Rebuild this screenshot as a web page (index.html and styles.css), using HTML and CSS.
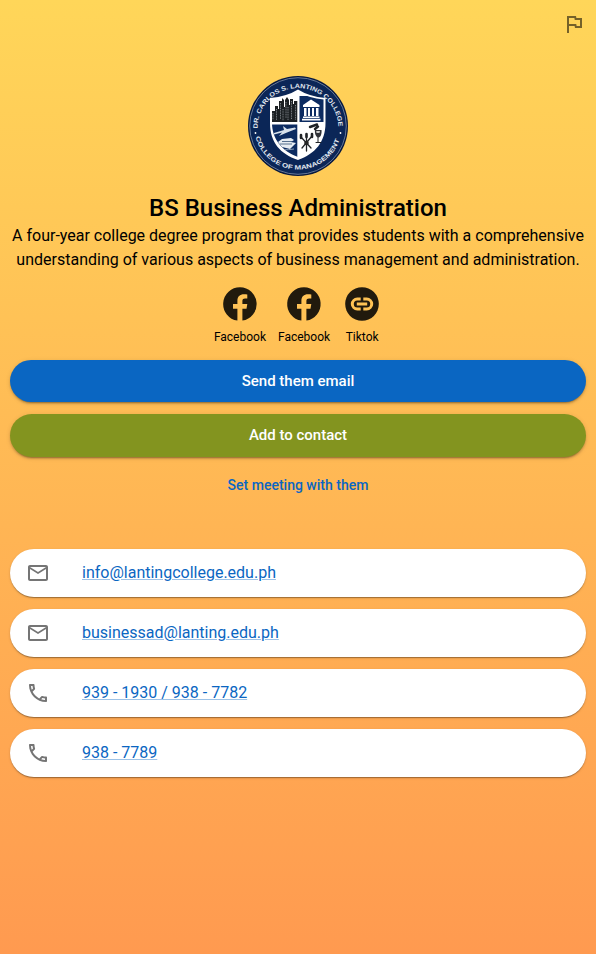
FILE: index.html
```html
<!DOCTYPE html>
<html lang="en">
<head>
<meta charset="utf-8">
<title>BS Business Administration</title>
<link rel="stylesheet" href="styles.css">
</head>
<body>
<svg class="sprite" aria-hidden="true">
  <symbol id="fb-round" viewBox="0 0 40 40"><path d="M20 3.2A16.8 16.8 0 0 0 17.4 36.6V24.7H13V20H17.4V16.8C17.4 12.400 19.9 10.200 24 10.200C25.4 10.200 26.5 10.300 27.3 10.400V14.500H25.2C22.9 14.500 22.4 15.500 22.4 17.2V20H27.3L26.5 24.7H22.4V36.6A16.8 16.8 0 0 0 20 3.2Z"/></symbol>
  <symbol id="mail" viewBox="0 0 24 24"><path d="M22 6c0-1.1-.9-2-2-2H4c-1.1 0-2 .9-2 2v12c0 1.1.9 2 2 2h16c1.1 0 2-.9 2-2V6zm-2 0-8 5-8-5h16zm0 12H4V8l8 5 8-5v10z"/></symbol>
  <symbol id="phone" viewBox="0 0 24 24"><path d="M6.54 5c.06.89.21 1.76.45 2.59l-1.2 1.2c-.41-1.2-.67-2.47-.76-3.79h1.51m9.86 12.02c.85.24 1.72.39 2.6.45v1.49c-1.32-.09-2.59-.35-3.8-.75l1.2-1.19M7.5 3H4c-.55 0-1 .45-1 1 0 9.39 7.61 17 17 17 .55 0 1-.45 1-1v-3.49c0-.55-.45-1-1-1-1.24 0-2.45-.2-3.57-.57-.1-.04-.21-.05-.31-.05-.26 0-.51.1-.71.29l-2.2 2.2c-2.83-1.45-5.15-3.76-6.59-6.59l2.2-2.2c.28-.28.36-.67.25-1.02C8.7 6.45 8.5 5.25 8.5 4c0-.55-.45-1-1-1z"/></symbol>
</svg>

<header class="toolbar">
  <svg class="flag" viewBox="0 0 24 24"><path d="m12.36 6 .4 2H18v6h-3.36l-.4-2H7V6h5.36M14 4H5v17h2v-7h5.600l.4 2h7V6h-5.600L14 4z"/></svg>
</header>

<main class="card">
  <svg class="logo" viewBox="0 0 100 100">
    <defs>
      <path id="arc-top" d="M9.500 52.500A40.500 40.500 0 1 1 90.500 52.500"/>
      <path id="arc-bottom" d="M7.500 61A44 44 0 0 0 92.500 61"/>
      <clipPath id="shield-clip"><path d="M24 23.500Q39 22 50 16Q61 22 75.500 23.500V47C75.500 64 66 75 50 81C34 75 24 63 24 47Z"/></clipPath>
    </defs>
    <circle cx="50" cy="50" r="50" fill="#07183f"/>
    <circle cx="50" cy="50" r="48.300" fill="#0b2657" stroke="#8f9fb8" stroke-width=".7"/>
    <text class="seal-text"><textPath href="#arc-top" textLength="125" lengthAdjust="spacingAndGlyphs">DR. CARLOS S. LANTING COLLEGE</textPath></text>
    <text class="seal-text"><textPath href="#arc-bottom" textLength="112" lengthAdjust="spacingAndGlyphs">COLLEGE OF MANAGEMENT</textPath></text>
    <circle cx="7.500" cy="57" r=".9" fill="#fff"/>
    <circle cx="92.500" cy="57" r=".9" fill="#fff"/>
    <path d="M22 22Q39 20.500 50 13.500Q61 20.500 77.500 22V47C77.500 66 67 78 50 84C32 78 22 66 22 47Z" fill="#fff"/>
    <g clip-path="url(#shield-clip)">
      <path d="M51.500 20H76V46H51.500ZM22 48.500H49.300V82H22Z" fill="#0c2b61"/>
      <path d="M24 46V35H27V30H30V33H31V25H34V22L36 24V31H37V24L39 21L41 24V29H42V23H45V28H46V25H49.300V46Z" fill="#1c2023"/>
      <path d="M25 37V44M28.500 33V44M32.500 27V43M35 33V45M38 26V42M40 31V44M43.500 25V43M47.500 29V44" stroke="#a5abb0" stroke-width=".7" stroke-dasharray="1 .7"/>
      <path d="M55 29L63 23.500L71.500 29V31H55ZM56 32H58.500V40H56ZM60 32H62V40H60ZM64 32H66V40H64ZM68 32H70.500V40H68ZM55 40.500H71.500V42H55ZM54 42.800H72.500V44.500H54Z" fill="#fff"/>
      <path d="M26 57L36 54L35 50L39 53L47 51.500L48 53L39 56.500L31 60L34 56.500L26 58.500Z" fill="#d7e1eb"/>
      <path d="M30 66L34 63L43 62L46 64L43 66L48 67L42 73L34 71Z" fill="#e7edf2"/>
      <path d="M34 65.500H44M32 68H44" stroke="#345174" stroke-width=".8"/>
      <path d="M28 72Q34 75 46 73" fill="none" stroke="#8ba0b7"/>
    </g>
    <g fill="none" stroke="#202327" stroke-linecap="round">
      <path d="M53 61L63 72M64 60L54 72M58.500 59V75" stroke-width="1.300"/>
      <path d="M53 59V62M58.500 58V61M64 58V61" stroke-width="2.600"/>
      <path d="M62 51L69 48.500M67 53L70 50.500" stroke-width="2.400"/>
      <path d="M70 61V66M68 66.500H73" stroke-width="1"/>
    </g>
    <path d="M67 54H73.500C74 59 72 61.500 70.300 61.500C68 61 66.500 58 67 54Z" fill="#303237"/>
    <path d="M68.200 55H72L71.500 57H68.500Z" fill="#ccc"/>
    <circle cx="58.500" cy="67" r="2.300" fill="#252525"/>
  </svg>

  <h1 class="title">BS Business Administration</h1>
  <p class="description">A four-year college degree program that provides students with a comprehensive understanding of various aspects of business management and administration.</p>

  <nav class="socials">
    <a class="social"><svg class="social-icon"><use href="#fb-round"/></svg><span>Facebook</span></a>
    <a class="social"><svg class="social-icon"><use href="#fb-round"/></svg><span>Facebook</span></a>
    <a class="social"><svg class="social-icon" viewBox="0 0 40 40"><circle cx="20" cy="20" r="16.800"/><path class="link-mark" d="M18.700 15H15.300A5 5 0 0 0 15.300 25H18.700M21.300 15H24.700A5 5 0 0 1 24.700 25H21.300M14.800 20H25.200"/></svg><span>Tiktok</span></a>
  </nav>

  <div class="actions">
    <button class="button email">Send them email</button>
    <button class="button contact">Add to contact</button>
    <button class="meeting">Set meeting with them</button>
  </div>

  <section class="contacts">
    <div class="row"><svg class="row-icon"><use href="#mail"/></svg><a href="#">info@lantingcollege.edu.ph</a></div>
    <div class="row"><svg class="row-icon"><use href="#mail"/></svg><a href="#">businessad@lanting.edu.ph</a></div>
    <div class="row"><svg class="row-icon"><use href="#phone"/></svg><a href="#">939 - 1930 / 938 - 7782</a></div>
    <div class="row"><svg class="row-icon"><use href="#phone"/></svg><a href="#">938 - 7789</a></div>
  </section>
</main>
</body>
</html>
```
FILE: styles.css
```css
* { box-sizing: border-box; }
body {
  margin: 0;
  min-height: 954px;
  font-family: Roboto, sans-serif;
  color: rgba(0, 0, 0, .87);
  background: linear-gradient(#ffd659, #ff9a50);
}
.sprite { display: none; }
.toolbar {
  display: flex;
  justify-content: flex-end;
  height: 76px;
  padding: 12px 10px;
}
.flag { width: 24px; height: 24px; fill: rgba(0, 0, 0, .54); }
.card {
  display: flex;
  flex-direction: column;
  align-items: center;
  padding: 0 10px;
}
.logo { display: block; width: 100px; height: 100px; }
.seal-text { font: bold 6.3px "Liberation Sans", sans-serif; fill: #e3e9f1; }
.title {
  margin: 14px 0 0;
  font-size: 24px;
  font-weight: 500;
  line-height: 36px;
  color: #000;
}
.description {
  margin: -2px -10px 0;
  padding: 0 8px;
  font-size: 16px;
  line-height: 24px;
  text-align: center;
  color: #000;
}
.socials { display: flex; gap: 12px; margin-top: 12px; }
.social {
  display: flex;
  flex-direction: column;
  align-items: center;
  min-width: 40px;
  font-size: 12px;
  line-height: 20px;
  color: #000;
}
.social span { margin-top: 3px; }
.social-icon { width: 40px; height: 40px; fill: #211a0d; }
.link-mark { fill: none; stroke: #ffc354; stroke-width: 3; }
.actions {
  display: flex;
  flex-direction: column;
  align-items: center;
  width: 100%;
  margin-top: 13px;
}
.button {
  width: 100%;
  height: 42.25px;
  border: 0;
  border-radius: 28px;
  font: 500 15px/26px Roboto, sans-serif;
  color: #fff;
  box-shadow: 0 3px 1px -2px rgba(0, 0, 0, .2), 0 2px 2px rgba(0, 0, 0, .14), 0 1px 5px rgba(0, 0, 0, .12);
}
.email { background: #0a66c2; }
.contact { margin-top: 12px; background: #83941f; }
.meeting {
  margin-top: 10px;
  height: 37px;
  border: 0;
  background: none;
  font: 500 14px/24px Roboto, sans-serif;
  color: #0a66c2;
}
.contacts {
  display: flex;
  flex-direction: column;
  gap: 12px;
  width: 100%;
  margin-top: 45.500px;
}
.row {
  display: flex;
  align-items: center;
  height: 48px;
  padding: 0 16px;
  border-radius: 28px;
  background: #fff;
  box-shadow: 0 2px 1px -1px rgba(0, 0, 0, .2), 0 1px 1px rgba(0, 0, 0, .14), 0 1px 3px rgba(0, 0, 0, .12);
}
.row-icon { width: 24px; height: 24px; margin-right: 32px; fill: #757575; }
.row a {
  font-size: 16px;
  line-height: 24px;
  color: #0a66c2;
  text-decoration-color: rgba(10, 102, 194, .4);
}
```
